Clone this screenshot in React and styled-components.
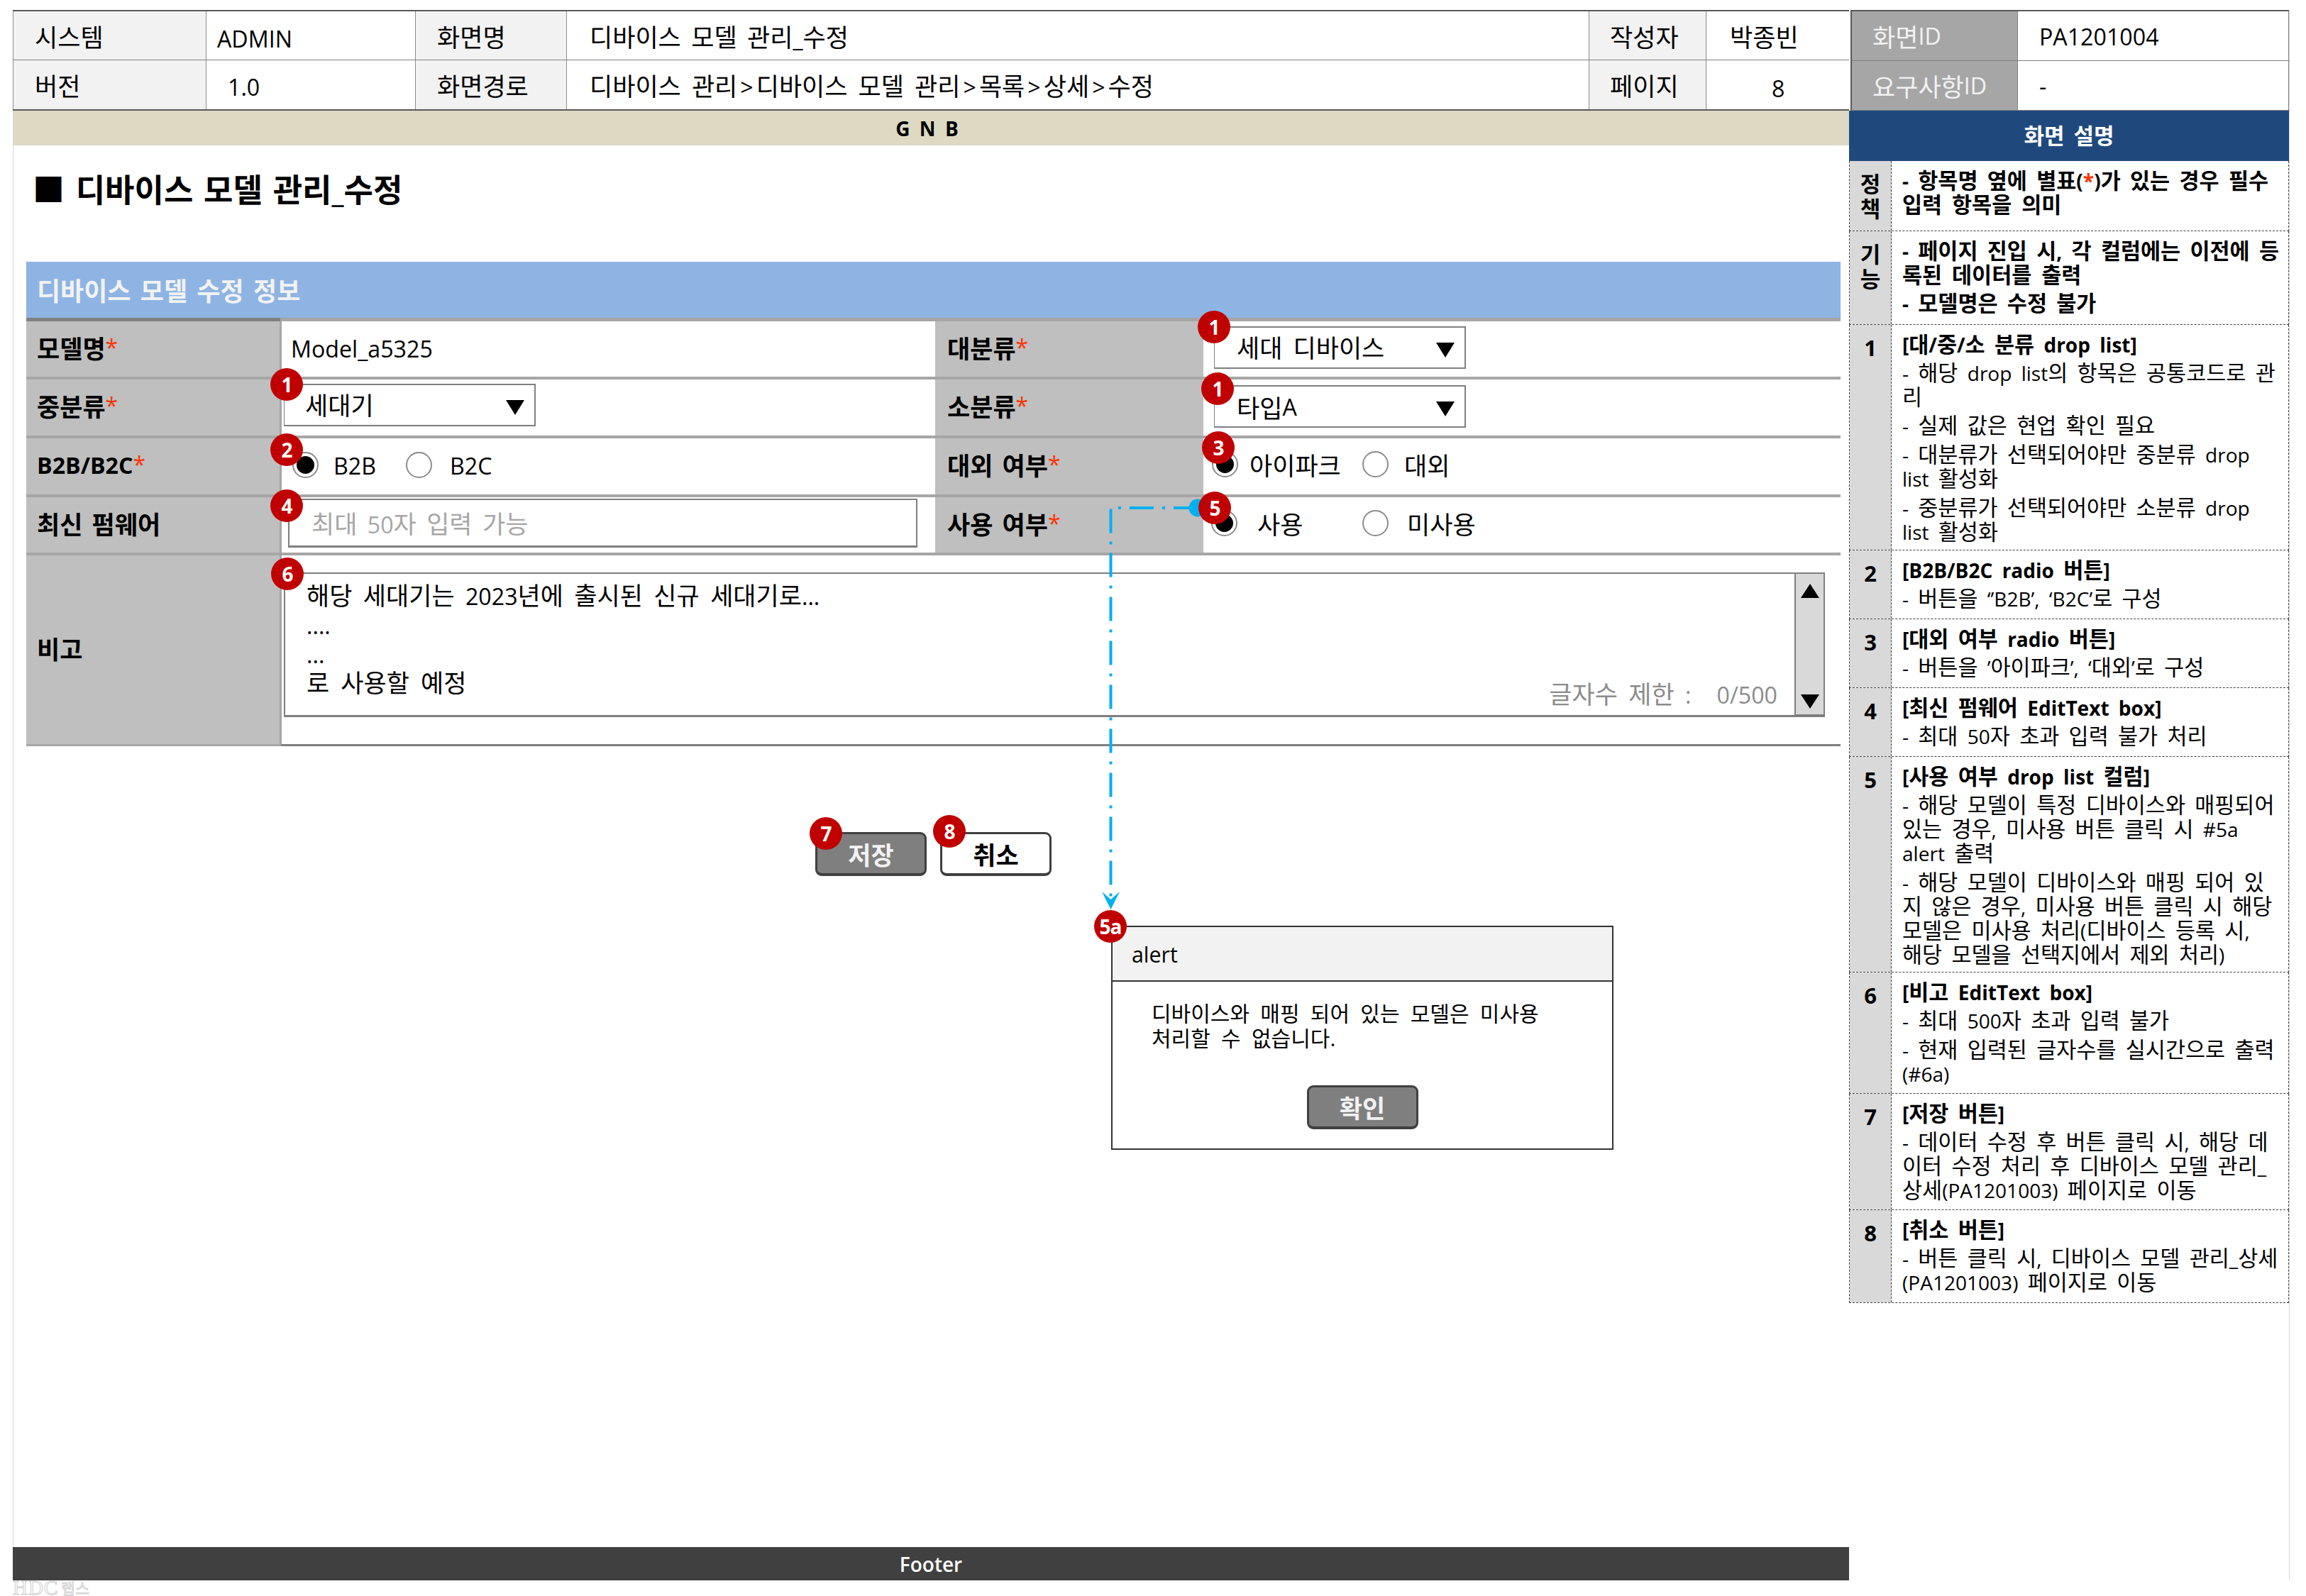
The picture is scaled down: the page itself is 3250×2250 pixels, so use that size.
import styled, { createGlobalStyle } from "styled-components";

const GlobalStyle = createGlobalStyle`
  html, body {
    margin: 0;
    padding: 0;
    background: #fff;
  }
  body {
    font-family: "Open Sans", "Noto Sans CJK KR", sans-serif;
    color: #000;
  }
  * { box-sizing: border-box; }
`;

const Page = styled.div`
  position: relative;
  width: 3250px;
  height: 2250px;
  overflow: hidden;
  padding: 14px 0 0 18px;
`;

const Sheet = styled.div`
  display: grid;
  grid-template-columns: 2588px 621px;
  height: 2214px;
`;

const LeftColumn = styled.div`
  display: flex;
  flex-direction: column;
  border-left: 1px solid #d9d9d9;
`;

const RightColumn = styled.div`
  border-right: 1px solid #d9d9d9;
`;

const Latin = styled.span`
  font-size: 0.92em;
`;

// latin runs are a bit smaller than hangul in the source document
function Mixed({ text }) {
  const parts = String(text)
    .split(/([\x00-\x7f‘’“”]+)/)
    .filter(Boolean);
  return (
    <span>
      {parts.map((part, index) =>
        /^[\x00-\x7f‘’“”]/.test(part) ? <Latin key={index}>{part}</Latin> : part
      )}
    </span>
  );
}

const InfoTable = styled.div`
  display: grid;
  grid-template-columns: 272px 295px 213px 1441px 165px 202px;
  grid-auto-rows: 69px;
  border-top: 2px solid #595959;
  border-bottom: 2px solid #595959;
  margin-left: -1px;
  word-spacing: 6px;
`;

const InfoCell = styled.div`
  display: flex;
  align-items: center;
  font-size: 35px;
  white-space: nowrap;
  padding-left: ${(p) => p.$pl}px;
  padding-top: ${(p) => p.$pt || 0}px;
  background: ${(p) => (p.$label ? "#f2f2f2" : "#fff")};
  border-left: 1px solid #8c8c8c;
  border-bottom: ${(p) => (p.$top ? "1px solid #808080" : "none")};
`;

const PathSep = styled.span`
  padding: 0 4px;
  font-size: 0.92em;
`;

const Gnb = styled.div`
  height: 49px;
  margin-left: -1px;
  background: #ddd9c3;
  display: flex;
  align-items: center;
  justify-content: center;
  padding-right: 11px;
  font-size: 28px;
  font-weight: 700;
  word-spacing: 6px;
`;

const PageTitle = styled.h1`
  margin: 0;
  height: 164px;
  padding: 33px 0 0 27px;
  font-size: 45px;
  line-height: 60px;
  font-weight: 700;
  white-space: nowrap;
  word-spacing: 4px;
`;

const SectionTitle = styled.div`
  margin-left: 18px;
  width: 2557px;
  height: 79px;
  background: #8eb4e3;
  color: #f2f2f2;
  display: flex;
  align-items: center;
  padding-left: 15px;
  font-size: 36px;
  font-weight: 700;
  word-spacing: 4px;
`;

const FormTable = styled.div`
  position: relative;
  margin-left: 18px;
  width: 2557px;
  border-top: 5px solid #a6a6a6;
  &::before {
    content: "";
    position: absolute;
    left: 0;
    top: -5px;
    width: 358px;
    height: 5px;
    background: #7f7f7f;
  }
`;

const FormRow = styled.div`
  display: grid;
  grid-template-columns: ${(p) => (p.$wide ? "360px 1fr" : "360px 921px 378px 1fr")};
  height: ${(p) => p.$h}px;
  border-bottom: ${(p) => (p.$last ? 3 : 4)}px solid #a6a6a6;
  ${(p) =>
    p.$last &&
    "border-image: linear-gradient(to right, #a6a6a6 360px, #7f7f7f 360px) 1;"}
`;

const FieldLabel = styled.div`
  display: flex;
  align-items: center;
  padding-left: ${(p) => (p.$first ? 15 : 17)}px;
  padding-bottom: 6px;
  background: #bfbfbf;
  font-size: 35px;
  font-weight: 700;
  white-space: nowrap;
  word-spacing: 4px;
  border-right: ${(p) => (p.$first ? "3px solid #a6a6a6" : "none")};
`;

const Star = styled.span`
  color: #ff3300;
  font-size: 32px;
  font-weight: 400;
`;

const FieldValue = styled.div`
  display: flex;
  align-items: ${(p) => (p.$top ? "flex-start" : "center")};
  padding-left: ${(p) => p.$pl}px;
  padding-top: ${(p) => p.$pt || 0}px;
  padding-bottom: ${(p) => p.$pb || 0}px;
  font-size: 35px;
  white-space: nowrap;
`;

const SelectBox = styled.div`
  position: relative;
  width: 355px;
  height: 60px;
  display: flex;
  align-items: center;
  padding-left: ${(p) => p.$pl}px;
  padding-bottom: ${(p) => p.$pb || 0}px;
  border: 2px solid #7f7f7f;
  border-left-width: 1.5px;
  font-size: 35px;
  word-spacing: 6px;
  &::after {
    content: "";
    position: absolute;
    right: 14px;
    top: 21px;
    border-left: 13px solid transparent;
    border-right: 13px solid transparent;
    border-top: 21px solid #000;
  }
`;

const RadioOption = styled.label`
  display: flex;
  align-items: center;
  width: ${(p) => p.$w}px;
  gap: ${(p) => p.$gap}px;
`;

const RadioMark = styled.span`
  flex: none;
  width: 37px;
  height: 37px;
  border-radius: 50%;
  border: 2px solid #8c8c8c;
  background: #fff;
  display: flex;
  align-items: center;
  justify-content: center;
  &::after {
    content: "";
    width: 25px;
    height: 25px;
    border-radius: 50%;
    background: ${(p) => (p.$checked ? "#000" : "transparent")};
  }
`;

const TextBox = styled.div`
  width: 887px;
  height: 69px;
  display: flex;
  align-items: center;
  padding-left: 31px;
  border: 2px solid #7f7f7f;
  border-bottom-width: 3px;
  color: #a6a6a6;
  font-size: 35px;
  word-spacing: 6px;
`;

const MemoBox = styled.div`
  position: relative;
  width: 2172px;
  height: 204px;
  padding: 11px 0 0 30px;
  border: 2px solid #7f7f7f;
  border-right: none;
  border-bottom-width: 3px;
  font-size: 35px;
  line-height: 40px;
  word-spacing: 7px;
`;

const MemoCounter = styled.div`
  position: absolute;
  right: 67px;
  bottom: 8px;
  display: flex;
  gap: 36px;
  color: #8c8c8c;
`;

const ScrollBar = styled.div`
  position: absolute;
  top: -2px;
  right: 0;
  bottom: -3px;
  width: 43px;
  background: #d9d9d9;
  border: 2px solid #7f7f7f;
  border-bottom-width: 4px;
  display: flex;
  flex-direction: column;
  justify-content: space-between;
  align-items: center;
  padding: 14px 0 8px;
`;

const ScrollArrow = styled.span`
  width: 0;
  height: 0;
  border-left: 13px solid transparent;
  border-right: 13px solid transparent;
  ${(p) => (p.$up ? "border-bottom: 20px solid #000;" : "border-top: 20px solid #000;")}
`;

const ButtonRow = styled.div`
  display: flex;
  gap: 19px;
  margin: 121px 0 0 1130px;
`;

const ActionButton = styled.div`
  width: 157px;
  height: 62px;
  display: flex;
  align-items: center;
  justify-content: center;
  border: 3px solid #404040;
  border-bottom-width: 4px;
  border-radius: 9px;
  background: ${(p) => (p.$primary ? "#7f7f7f" : "#fff")};
  color: ${(p) => (p.$primary ? "#f2f2f2" : "#000")};
  font-size: 35px;
  font-weight: 700;
`;

const AlertBox = styled.div`
  width: 708px;
  height: 316px;
  margin: 70px 0 0 1547px;
  display: flex;
  flex-direction: column;
  border: 2px solid #333;
`;

const AlertHead = styled.div`
  height: 77px;
  flex: none;
  display: flex;
  align-items: center;
  padding-left: 27px;
  background: #f2f2f2;
  border-bottom: 2px solid #333;
  font-size: 33px;
`;

const AlertText = styled.div`
  padding: 27px 0 0 55px;
  font-size: 30px;
  line-height: 35px;
  white-space: nowrap;
  word-spacing: 7.5px;
`;

const AlertFoot = styled.div`
  display: flex;
  justify-content: center;
  margin-top: 49px;
`;

const Footer = styled.div`
  margin-top: auto;
  margin-left: -1px;
  height: 47px;
  background: #404040;
  color: #fff;
  display: flex;
  align-items: center;
  justify-content: center;
  font-size: 28px;
  font-weight: 600;
`;

const MetaTable = styled.div`
  display: grid;
  grid-template-columns: 235px 384px;
  grid-auto-rows: 70px;
  margin-left: 2px;
  border-top: 2px solid #595959;
  border-right: 1px solid #7f7f7f;
`;

const MetaLabel = styled.div`
  display: flex;
  align-items: center;
  padding-left: 29px;
  background: #a6a6a6;
  color: #f2f2f2;
  font-size: 35px;
  border-left: 2px solid #595959;
  border-bottom: 1px solid #808080;
`;

const MetaValue = styled.div`
  display: flex;
  align-items: center;
  padding-left: 30px;
  font-size: 35px;
  border-left: 1px solid #808080;
  border-bottom: 1px solid #808080;
`;

const PanelHead = styled.div`
  height: 71px;
  background: #1f497d;
  color: #fff;
  display: flex;
  align-items: center;
  justify-content: center;
  padding-bottom: 4px;
  font-size: 31px;
  font-weight: 700;
  word-spacing: 5px;
`;

const PanelRow = styled.div`
  display: grid;
  grid-template-columns: 59px 1fr;
  height: ${(p) => p.$h}px;
  border-left: 1px dashed #404040;
  border-right: 1px dashed #404040;
  border-bottom: 1px dashed #404040;
`;

const PanelNum = styled.div`
  padding-top: 15px;
  background: #d9d9d9;
  border-right: 1px dashed #404040;
  text-align: center;
  font-size: 31px;
  line-height: 35px;
  font-weight: 700;
  white-space: pre-line;
`;

const PanelBody = styled.div`
  padding: ${(p) => p.$pt}px 0 0 15px;
  font-size: 30.5px;
  line-height: 33px;
  white-space: nowrap;
  word-spacing: 6px;
`;

const PanelLine = styled.div`
  font-weight: ${(p) => (p.$bold ? 700 : 400)};
  margin-top: ${(p) => p.$mt || 0}px;
`;

const RedStar = styled.span`
  color: #ff3300;
`;

const Badge = styled.div`
  position: absolute;
  left: ${(p) => p.$x - 23}px;
  top: ${(p) => p.$y - 23}px;
  width: 46px;
  height: 46px;
  border-radius: 50%;
  background: #c00000;
  color: #fff;
  display: flex;
  align-items: center;
  justify-content: center;
  font-size: 28px;
  font-weight: 700;
  letter-spacing: -1px;
`;

const Connector = styled.svg`
  position: absolute;
  left: 0;
  top: 0;
  pointer-events: none;
`;

const Watermark = styled.div`
  position: absolute;
  left: 18px;
  top: 2227px;
  height: 22px;
  display: flex;
  align-items: flex-end;
  gap: 4px;
  font-family: "Liberation Serif", serif;
  font-size: 29px;
  line-height: 22px;
  letter-spacing: 1px;
  color: transparent;
  -webkit-text-stroke: 1px #d0d0d0;
`;

const WatermarkHangul = styled.span`
  font-family: "Noto Sans CJK KR", sans-serif;
  font-size: 21px;
`;

const BADGES = [
  { x: 1711, y: 461, label: "1" },
  { x: 404, y: 542, label: "1" },
  { x: 1716, y: 548, label: "1" },
  { x: 404, y: 634, label: "2" },
  { x: 1717, y: 631, label: "3" },
  { x: 404, y: 713, label: "4" },
  { x: 1712, y: 716, label: "5" },
  { x: 405, y: 809, label: "6" },
  { x: 1164, y: 1175, label: "7" },
  { x: 1338, y: 1172, label: "8" },
  { x: 1565, y: 1306, label: "5a" },
];

const SCREEN_PATH = ["디바이스 관리", "디바이스 모델 관리", "목록", "상세", "수정"];

const PANEL_ROWS = [
  {
    num: "1",
    h: 318,
    blocks: [
      ["[대/중/소 분류 drop list]"],
      ["- 해당 drop list의 항목은 공통코드로 관", "리"],
      ["- 실제 값은 현업 확인 필요"],
      ["- 대분류가 선택되어야만 중분류 drop", "list 활성화"],
      ["- 중분류가 선택되어야만 소분류 drop", "list 활성화"],
    ],
  },
  {
    num: "2",
    h: 97,
    blocks: [["[B2B/B2C radio 버튼]"], ["- 버튼을 ‘’B2B’, ‘B2C’로 구성"]],
  },
  {
    num: "3",
    h: 97,
    blocks: [["[대외 여부 radio 버튼]"], ["- 버튼을 ’아이파크’, ‘대외’로 구성"]],
  },
  {
    num: "4",
    h: 97,
    blocks: [["[최신 펌웨어 EditText box]"], ["- 최대 50자 초과 입력 불가 처리"]],
  },
  {
    num: "5",
    h: 304,
    blocks: [
      ["[사용 여부 drop list 컬럼]"],
      ["- 해당 모델이 특정 디바이스와 매핑되어", "있는 경우, 미사용 버튼 클릭 시 #5a", "alert 출력"],
      [
        "- 해당 모델이 디바이스와 매핑 되어 있",
        "지 않은 경우, 미사용 버튼 클릭 시 해당",
        "모델은 미사용 처리(디바이스 등록 시,",
        "해당 모델을 선택지에서 제외 처리)",
      ],
    ],
  },
  {
    num: "6",
    h: 171,
    blocks: [
      ["[비고 EditText box]"],
      ["- 최대 500자 초과 입력 불가"],
      ["- 현재 입력된 글자수를 실시간으로 출력", "(#6a)"],
    ],
  },
  {
    num: "7",
    h: 164,
    blocks: [
      ["[저장 버튼]"],
      ["- 데이터 수정 후 버튼 클릭 시, 해당 데", "이터 수정 처리 후 디바이스 모델 관리_", "상세(PA1201003) 페이지로 이동"],
    ],
  },
  {
    num: "8",
    h: 131,
    blocks: [
      ["[취소 버튼]"],
      ["- 버튼 클릭 시, 디바이스 모델 관리_상세", "(PA1201003) 페이지로 이동"],
    ],
  },
];

function PanelEntry({ row }) {
  return (
    <PanelRow $h={row.h}>
      <PanelNum>{row.num}</PanelNum>
      <PanelBody $pt={11}>
        {row.blocks.map((lines, blockIndex) =>
          lines.map((line, lineIndex) => (
            <PanelLine
              key={line}
              $bold={blockIndex === 0}
              $mt={lineIndex === 0 && blockIndex > 0 ? (blockIndex === 1 ? 6 : 7) : 0}
            >
              <Mixed text={line} />
            </PanelLine>
          ))
        )}
      </PanelBody>
    </PanelRow>
  );
}

function Radio({ checked, w, gap, children }) {
  return (
    <RadioOption $w={w} $gap={gap}>
      <RadioMark $checked={checked} />
      <Mixed text={children} />
    </RadioOption>
  );
}

export default function App() {
  return (
    <Page>
      <GlobalStyle />
      <Sheet>
        <LeftColumn>
          <InfoTable>
            <InfoCell $label $top $pl={30}>시스템</InfoCell>
            <InfoCell $top $pl={15} $pt={6}><Mixed text="ADMIN" /></InfoCell>
            <InfoCell $label $top $pl={30}>화면명</InfoCell>
            <InfoCell $top $pl={32}><Mixed text="디바이스 모델 관리_수정" /></InfoCell>
            <InfoCell $label $top $pl={29}>작성자</InfoCell>
            <InfoCell $top $pl={33}>박종빈</InfoCell>
            <InfoCell $label $pl={30}>버전</InfoCell>
            <InfoCell $pl={30} $pt={4}><Mixed text="1.0" /></InfoCell>
            <InfoCell $label $pl={30}>화면경로</InfoCell>
            <InfoCell $pl={32}>
              <span>
                {SCREEN_PATH.map((part, index) => (
                  <span key={part}>
                    {index > 0 && <PathSep>&gt;</PathSep>}
                    {part}
                  </span>
                ))}
              </span>
            </InfoCell>
            <InfoCell $label $pl={29}>페이지</InfoCell>
            <InfoCell $pl={92} $pt={8}><Mixed text="8" /></InfoCell>
          </InfoTable>
          <Gnb>G N B</Gnb>
          <PageTitle>■ <Mixed text="디바이스 모델 관리_수정" /></PageTitle>
          <SectionTitle>디바이스 모델 수정 정보</SectionTitle>
          <FormTable>
            <FormRow $h={82}>
              <FieldLabel $first>모델명<Star>*</Star></FieldLabel>
              <FieldValue $pl={13} $pb={4}><Mixed text="Model_a5325" /></FieldValue>
              <FieldLabel>대분류<Star>*</Star></FieldLabel>
              <FieldValue $pl={15} $pb={4}><SelectBox $pl={31} $pb={3}>세대 디바이스</SelectBox></FieldValue>
            </FormRow>
            <FormRow $h={83}>
              <FieldLabel $first>중분류<Star>*</Star></FieldLabel>
              <FieldValue $pl={3} $pb={7}><SelectBox $pl={29} $pb={3}>세대기</SelectBox></FieldValue>
              <FieldLabel>소분류<Star>*</Star></FieldLabel>
              <FieldValue $pl={15} $pb={3}><SelectBox $pl={31}>타입<Latin>A</Latin></SelectBox></FieldValue>
            </FormRow>
            <FormRow $h={83}>
              <FieldLabel $first><Mixed text="B2B/B2C" /><Star>*</Star></FieldLabel>
              <FieldValue $pl={15} $pb={5}>
                <Radio checked w={160} gap={21}>B2B</Radio>
                <Radio w={120} gap={25}>B2C</Radio>
              </FieldValue>
              <FieldLabel>대외 여부<Star>*</Star></FieldLabel>
              <FieldValue $pl={12} $pb={7}>
                <Radio checked w={212} gap={16}>아이파크</Radio>
                <Radio w={120} gap={22}>대외</Radio>
              </FieldValue>
            </FormRow>
            <FormRow $h={82}>
              <FieldLabel $first>최신 펌웨어</FieldLabel>
              <FieldValue $pl={9} $pb={6}><TextBox><Mixed text="최대 50자 입력 가능" /></TextBox></FieldValue>
              <FieldLabel>사용 여부<Star>*</Star></FieldLabel>
              <FieldValue $pl={11} $pb={6}>
                <Radio checked w={213} gap={28}>사용</Radio>
                <Radio w={120} gap={26}>미사용</Radio>
              </FieldValue>
            </FormRow>
            <FormRow $wide $last $h={269}>
              <FieldLabel $first>비고</FieldLabel>
              <FieldValue $top $pl={3} $pt={24}>
                <MemoBox>
                  <div><Mixed text="해당 세대기는 2023년에 출시된 신규 세대기로..." /></div>
                  <div><Mixed text="...." /></div>
                  <div><Mixed text="..." /></div>
                  <div>로 사용할 예정</div>
                  <MemoCounter>
                    <span><Mixed text="글자수 제한 :" /></span>
                    <span><Mixed text="0/500" /></span>
                  </MemoCounter>
                  <ScrollBar>
                    <ScrollArrow $up />
                    <ScrollArrow />
                  </ScrollBar>
                </MemoBox>
              </FieldValue>
            </FormRow>
          </FormTable>
          <ButtonRow>
            <ActionButton $primary>저장</ActionButton>
            <ActionButton>취소</ActionButton>
          </ButtonRow>
          <AlertBox>
            <AlertHead><Mixed text="alert" /></AlertHead>
            <AlertText>
              디바이스와 매핑 되어 있는 모델은 미사용
              <br />
              처리할 수 없습니다.
            </AlertText>
            <AlertFoot>
              <ActionButton $primary>확인</ActionButton>
            </AlertFoot>
          </AlertBox>
          <Footer>Footer</Footer>
        </LeftColumn>
        <RightColumn>
          <MetaTable>
            <MetaLabel>화면<Latin>ID</Latin></MetaLabel>
            <MetaValue><Mixed text="PA1201004" /></MetaValue>
            <MetaLabel>요구사항<Latin>ID</Latin></MetaLabel>
            <MetaValue><Mixed text="-" /></MetaValue>
          </MetaTable>
          <PanelHead>화면 설명</PanelHead>
          <PanelRow $h={99}>
            <PanelNum>{"정\n책"}</PanelNum>
            <PanelBody $pt={11}>
              <PanelLine $bold>
                <Mixed text="- 항목명 옆에 별표(" />
                <RedStar><Latin>*</Latin></RedStar>
                <Mixed text=")가 있는 경우 필수" />
              </PanelLine>
              <PanelLine $bold>입력 항목을 의미</PanelLine>
            </PanelBody>
          </PanelRow>
          <PanelRow $h={132}>
            <PanelNum>{"기\n능"}</PanelNum>
            <PanelBody $pt={11}>
              <PanelLine $bold><Mixed text="- 페이지 진입 시, 각 컬럼에는 이전에 등" /></PanelLine>
              <PanelLine $bold>록된 데이터를 출력</PanelLine>
              <PanelLine $bold $mt={7}><Mixed text="- 모델명은 수정 불가" /></PanelLine>
            </PanelBody>
          </PanelRow>
          {PANEL_ROWS.map((row) => (
            <PanelEntry key={row.num} row={row} />
          ))}
        </RightColumn>
      </Sheet>
      <Watermark>HDC<WatermarkHangul>랩스</WatermarkHangul></Watermark>
      <Connector width="3250" height="2250">
        <path
          d="M1688 716H1565.5V1270"
          fill="none"
          stroke="#00b0f0"
          strokeWidth="4"
          strokeDasharray="34 12 4 12"
        />
        <path d="M1553 1257L1565.5 1282L1578 1257L1565.5 1268Z" fill="#00b0f0" />
        <circle cx="1688" cy="716" r="12.5" fill="#00b0f0" />
      </Connector>
      {BADGES.map((badge) => (
        <Badge key={`${badge.x}-${badge.y}`} $x={badge.x} $y={badge.y}>{badge.label}</Badge>
      ))}
    </Page>
  );
}
